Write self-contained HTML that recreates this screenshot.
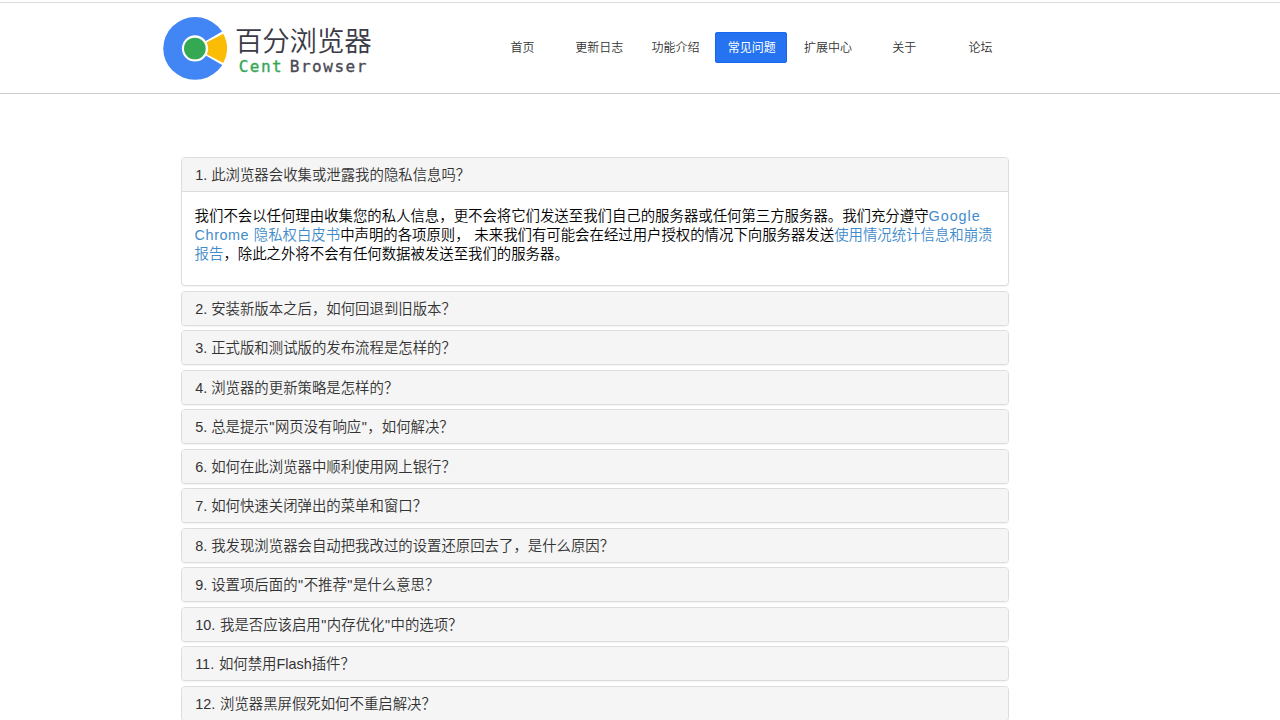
<!DOCTYPE html>
<html lang="zh-CN">
<head>
<meta charset="utf-8">
<title>常见问题 - 百分浏览器</title>
<style>
*{box-sizing:border-box;margin:0;padding:0}
html,body{width:1280px;height:720px;overflow:hidden;background:#fff}
body{position:relative;font-family:"Liberation Sans","Noto Sans CJK SC",sans-serif;font-size:14.4px;color:#333}
a{text-decoration:none;color:#428bca}
#topline{position:absolute;left:0;top:2px;width:1280px;height:1px;background:#dadce1}
#header{position:absolute;left:0;top:3px;width:1280px;height:91px;border-bottom:1px solid #ccc;background:#fff}
#logo{position:absolute;left:162px;top:12px;width:66px;height:66px}
#brand-cn{position:absolute;left:235px;top:21.6px;height:34px;line-height:34px;font-size:27.5px;font-weight:350;color:#3b3b47;white-space:nowrap;letter-spacing:-0.2px;font-family:"Liberation Sans","Noto Sans CJK SC",sans-serif}
#brand-en{position:absolute;left:238.7px;top:55.1px;height:18px;line-height:18px;font-size:16px;font-family:"DejaVu Sans Mono","Liberation Mono",monospace;letter-spacing:1.5px;word-spacing:-4.5px;-webkit-text-stroke:0.35px;color:#4a4a55;white-space:nowrap}
#brand-en b{font-weight:normal;color:#34a853}
#nav{position:absolute;left:0;top:0;list-style:none}
#nav li{position:absolute;top:29px;width:72px;height:31px;line-height:31px;text-align:center;font-size:12px;border-radius:3px}
#nav li a{color:#333;font-weight:350;display:block;position:relative;left:0.7px;top:1.4px}
#nav li.on{background:#2573f0;box-shadow:inset 0 0 0 1px #1568ef}
#nav li.on a{color:#fff;font-weight:400}
#faq{position:absolute;left:181px;top:157px;width:828px}
.panel{border:1px solid #ddd;border-radius:4px;background:#fff;margin-bottom:5px;box-shadow:0 1px 1px rgba(0,0,0,.05);overflow:hidden}
.panel:nth-child(even){margin-bottom:4px}
.panel h4{height:33px;line-height:33px;padding:0.8px 14px 0 13.2px;font-size:14.4px;font-weight:350;background:#f5f5f5;color:#333;white-space:nowrap}
.q{padding:0 0.5px}
.panel .body{border-top:1px solid #ddd;padding:15.3px 13px 0 12.6px;height:94px;line-height:19px;color:#000;font-weight:350}
</style>
</head>
<body>
<div id="topline"></div>
<div id="header">
  <svg id="logo" viewBox="0 0 66 66">
    <ellipse cx="33.15" cy="33.45" rx="31.9" ry="31.35" fill="#4285f4"/>
    <path d="M31.15 33.3 L65.79 13.30 L65.79 53.30 Z" fill="#fff"/>
    <path d="M33.15 33.3 L61.27 18.66 A31.7 31.7 0 0 1 61.27 47.94 Z" fill="#fbbc05"/>
    <circle cx="33" cy="33.4" r="13.1" fill="#fff"/>
    <circle cx="32.85" cy="33.5" r="10.85" fill="#34a853"/>
  </svg>
  <div id="brand-cn">百分浏览器</div>
  <div id="brand-en"><b>Cent</b> Browser</div>
  <ul id="nav">
    <li style="left:485.75px"><a href="#">首页</a></li>
    <li style="left:562.5px"><a href="#">更新日志</a></li>
    <li style="left:638.75px"><a href="#">功能介绍</a></li>
    <li class="on" style="left:715px"><a href="#">常见问题</a></li>
    <li style="left:791.25px"><a href="#">扩展中心</a></li>
    <li style="left:867.5px"><a href="#">关于</a></li>
    <li style="left:943.75px"><a href="#">论坛</a></li>
  </ul>
</div>
<div id="faq">
  <div class="panel">
    <h4>1. 此浏览器会收集或泄露我的隐私信息吗？</h4>
    <div class="body">我们不会以任何理由收集您的私人信息，更不会将它们发送至我们自己的服务器或任何第三方服务器。我们充分遵守<a href="#"><span style="letter-spacing:0.95px">Google</span> <span style="letter-spacing:0.57px">Chrome </span>隐私权白皮书</a>中声明的各项原则，<span style="letter-spacing:0.7px"> </span>未来我们有可能会在经过用户授权的情况下向服务器发送<a href="#">使用情况统计信息和崩溃报告</a>，除此之外将不会有任何数据被发送至我们的服务器。</div>
  </div>
  <div class="panel"><h4>2. 安装新版本之后，如何回退到旧版本？</h4></div>
  <div class="panel"><h4>3. 正式版和测试版的发布流程是怎样的？</h4></div>
  <div class="panel"><h4>4. 浏览器的更新策略是怎样的？</h4></div>
  <div class="panel"><h4>5. 总是提示<span class="q">"</span>网页没有响应<span class="q">"</span>，如何解决？</h4></div>
  <div class="panel"><h4>6. 如何在此浏览器中顺利使用网上银行？</h4></div>
  <div class="panel"><h4>7. 如何快速关闭弹出的菜单和窗口？</h4></div>
  <div class="panel"><h4>8. 我发现浏览器会自动把我改过的设置还原回去了，是什么原因？</h4></div>
  <div class="panel"><h4>9. 设置项后面的<span class="q">"</span>不推荐<span class="q">"</span>是什么意思？</h4></div>
  <div class="panel"><h4 style="word-spacing:0.8px">10. 我是否应该启用<span class="q">"</span>内存优化<span class="q">"</span>中的选项？</h4></div>
  <div class="panel"><h4 style="word-spacing:0.8px">11. 如何禁用Flash插件？</h4></div>
  <div class="panel"><h4 style="word-spacing:0.8px">12. 浏览器黑屏假死如何不重启解决？</h4></div>
  <div class="panel"><h4 style="word-spacing:0.8px">13. 如何自定义浏览器的启动参数？</h4></div>
</div>
</body>
</html>
